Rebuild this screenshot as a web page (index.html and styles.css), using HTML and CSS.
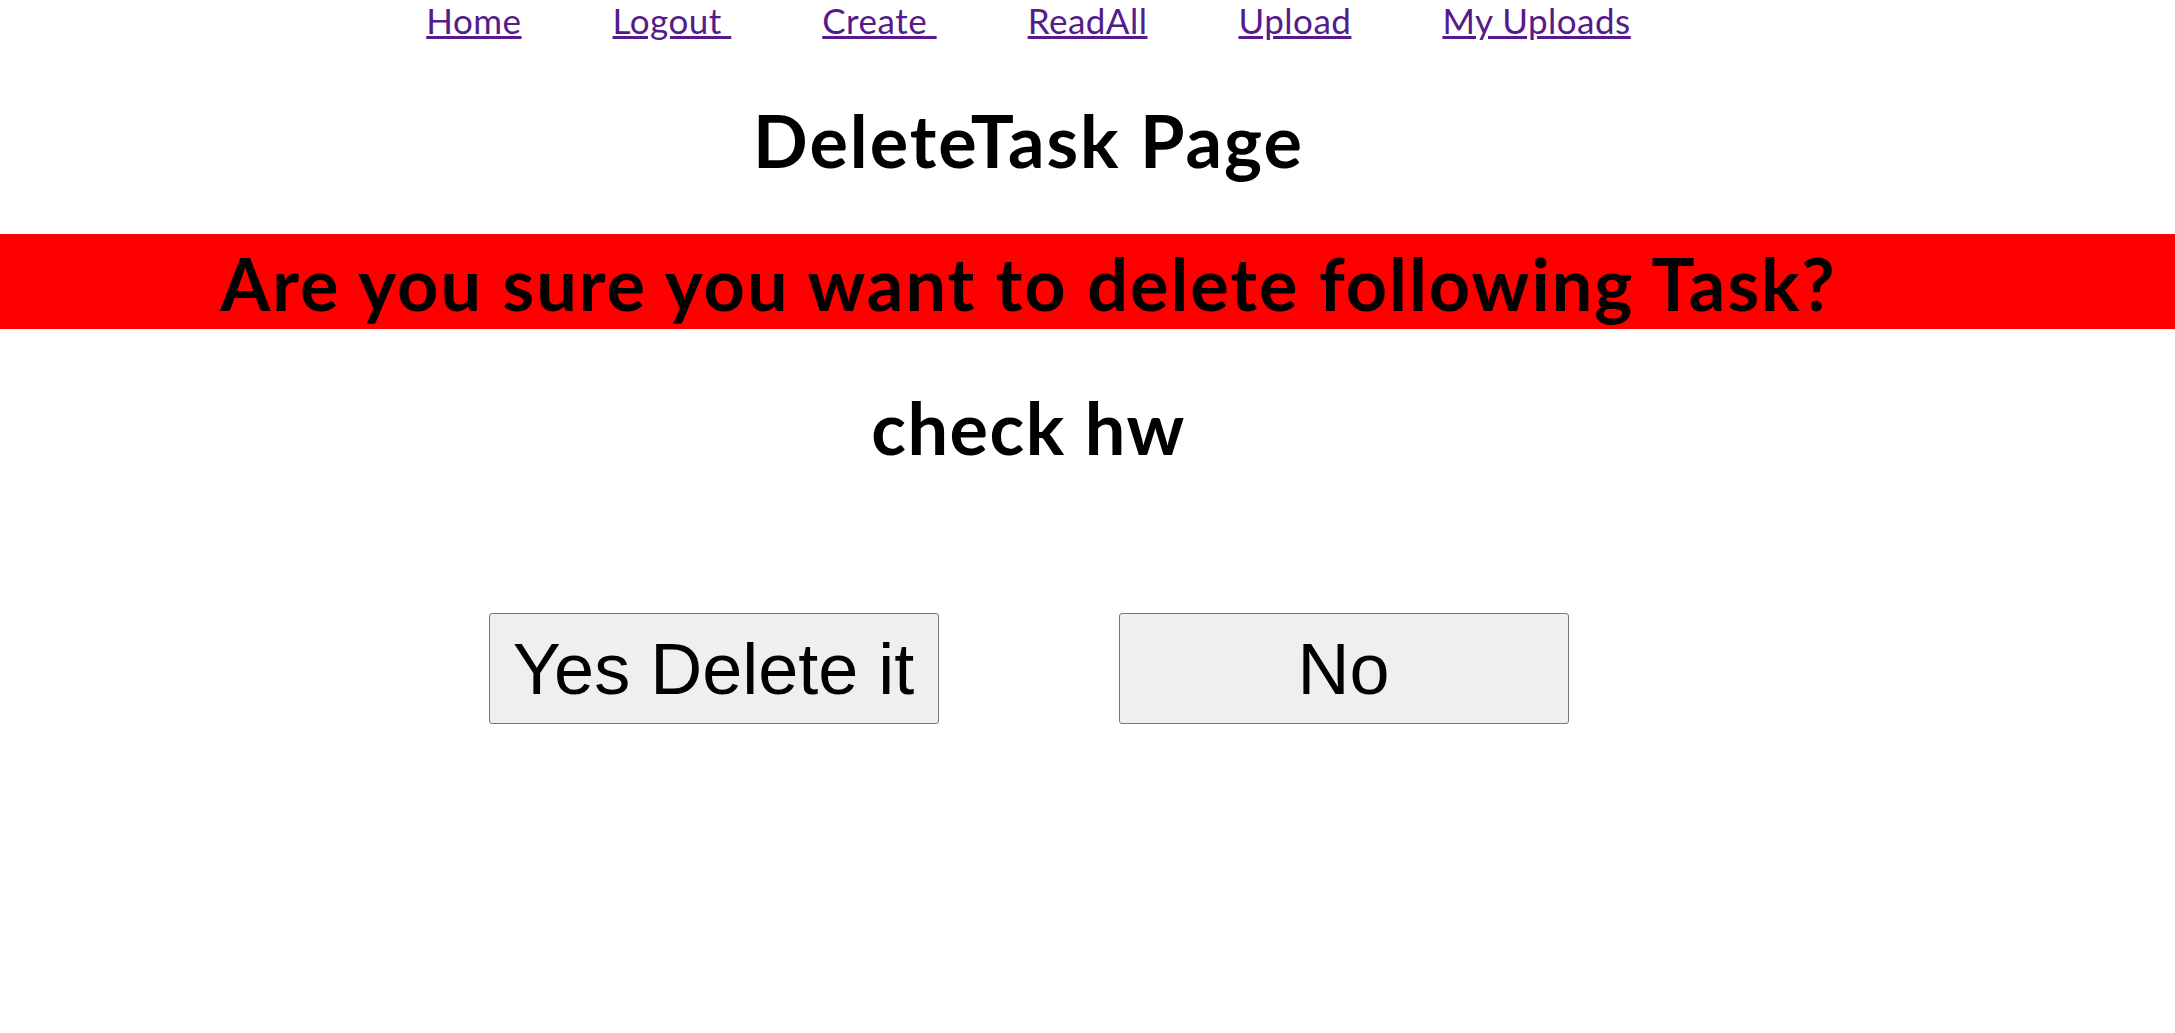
FILE: index.html
```html
<!DOCTYPE html>
<html lang="en">
<head>
<meta charset="utf-8">
<title>DeleteTask Page</title>
<link rel="stylesheet" href="styles.css">
</head>
<body>
<nav class="nav">
  <a href="#">Home</a>
  <a href="#">Logout&nbsp;</a>
  <a href="#">Create&nbsp;</a>
  <a href="#">ReadAll</a>
  <a href="#">Upload</a>
  <a href="#">My Uploads</a>
</nav>
<h1 class="title">DeleteTask Page</h1>
<div class="banner"><h1 class="banner-text">Are you sure you want to delete following Task?</h1></div>
<h1 class="task">check hw</h1>
<div class="actions">
  <button class="btn" type="button">Yes Delete it</button>
  <button class="btn" type="button">No</button>
</div>
</body>
</html>
```

FILE: styles.css
```css
html, body {
  margin: 0;
  padding: 0;
  background: #ffffff;
}
body {
  font-family: Lato, "Open Sans", sans-serif;
  color: #000;
}
.nav {
  display: flex;
  justify-content: center;
  gap: 91px;
  padding-right: 118px;
  font-size: 35px;
  letter-spacing: 0.5px;
  line-height: 40px;
  height: 40px;
}
.nav a {
  color: #551a8b;
  text-decoration: underline;
}
.title, .task, .banner-text {
  margin: 0;
  font-size: 72px;
  font-weight: 700;
  letter-spacing: 2px;
  text-align: center;
  padding-right: 118px;
}
.task {
  letter-spacing: 1.5px;
}
.title {
  margin-top: 50px;
  line-height: 100px;
}
.banner {
  margin-top: 44px;
  background: #ff0000;
  height: 95px;
  box-sizing: border-box;
  padding-top: 4px;
}
.banner-text {
  line-height: 91px;
}
.task {
  margin-top: 48px;
  line-height: 100px;
}
.actions {
  display: flex;
  justify-content: center;
  gap: 180px;
  margin-top: 136px;
  padding-right: 118px;
}
.btn {
  width: 450px;
  height: 111px;
  box-sizing: border-box;
  background: #efefef;
  border: 1px solid #767676;
  border-radius: 3px;
  font-family: "Liberation Sans", Arial, sans-serif;
  font-size: 72px;
  color: #000;
  padding: 0;
}
```
